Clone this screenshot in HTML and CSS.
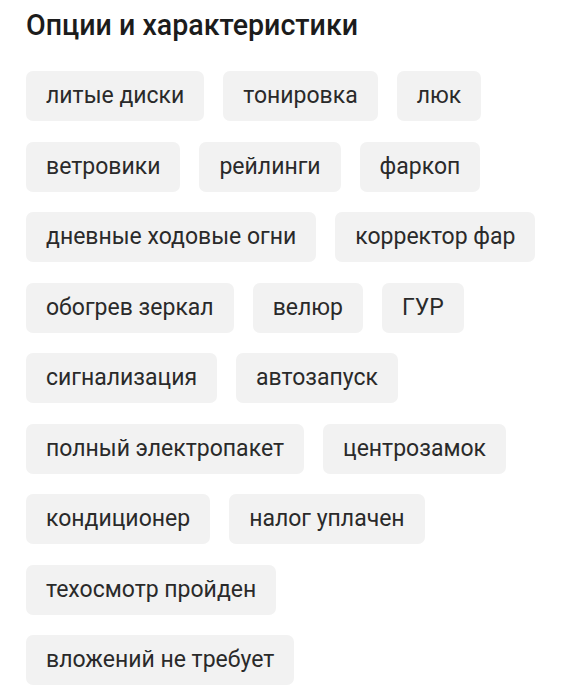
FILE: index.html
```html
<!DOCTYPE html>
<html lang="ru">
<head>
    <meta charset="UTF-8">
    <meta name="viewport" content="width=device-width, initial-scale=1.0">
    <title>Опции и характеристики</title>
    <link rel="stylesheet" href="styles.css">
</head>
<body>
    <div class="container">
        <h1>Опции и характеристики</h1>
        <div class="options">
            <span class="chip">литые диски</span>
            <span class="chip">тонировка</span>
            <span class="chip">люк</span>
            <span class="chip">ветровики</span>
            <span class="chip">рейлинги</span>
            <span class="chip">фаркоп</span>
            <span class="chip">дневные ходовые огни</span>
            <span class="chip">корректор фар</span>
            <span class="chip">обогрев зеркал</span>
            <span class="chip">велюр</span>
            <span class="chip">ГУР</span>
            <span class="chip">сигнализация</span>
            <span class="chip">автозапуск</span>
            <span class="chip">полный электропакет</span>
            <span class="chip">центрозамок</span>
            <span class="chip">кондиционер</span>
            <span class="chip">налог уплачен</span>
            <span class="chip">техосмотр пройден</span>
            <span class="chip">вложений не требует</span>
        </div>
    </div>
</body>
</html>
```

FILE: styles.css
```css
body {
    font-family: Roboto, "Noto Sans", sans-serif;
    margin: 0;
    padding: 0;
    background-color: #fff;
    color: #222;
}
.container {
    padding: 0 26px;
}
h1 {
    margin: 0;
    padding-top: 8px;
    font-size: 28.6px;
    line-height: 34px;
    font-weight: 500;
    color: #1c1c1c;
}
.options {
    display: flex;
    flex-wrap: wrap;
    column-gap: 19px;
    row-gap: 20.5px;
    margin-top: 29px;
}
.chip {
    display: inline-block;
    height: 50px;
    line-height: 50px;
    padding: 0 20px;
    font-size: 23px;
    background-color: #f2f2f2;
    border-radius: 7px;
    color: #2a2a2a;
}
```
